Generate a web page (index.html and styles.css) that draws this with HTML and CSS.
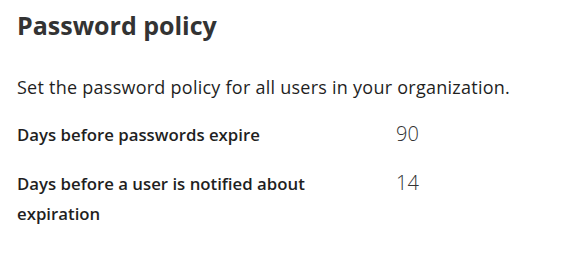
FILE: index.html
```html
<!DOCTYPE html>
<html lang="en">
<head>
    <meta charset="UTF-8">
    <meta name="viewport" content="width=device-width, initial-scale=1.0">
    <title>Password policy</title>
    <link rel="stylesheet" href="styles.css">
</head>
<body>
    <div class="policy">
        <h1 class="policy-title">Password policy</h1>

        <p class="policy-desc">Set the password policy for all users in your organization.</p>

        <div class="policy-row">
            <span class="policy-label">Days before passwords expire</span>
            <span class="policy-value">90</span>
        </div>

        <div class="policy-row">
            <span class="policy-label">Days before a user is notified about expiration</span>
            <span class="policy-value">14</span>
        </div>
    </div>
</body>
</html>
```

FILE: styles.css
```css
body {
    margin: 0;
    background-color: #ffffff;
    font-family: "Open Sans", "Noto Sans", sans-serif;
    color: #1f1f1f;
}

.policy {
    padding: 9px 17px 0 17px;
}

.policy-title {
    margin: 0;
    font-size: 25px;
    font-weight: 700;
    line-height: 32px;
    color: #333333;
}

.policy-desc {
    margin: 34px 0 0 0;
    font-size: 18px;
    letter-spacing: 0.25px;
    line-height: 24px;
}

.policy-row {
    display: grid;
    grid-template-columns: 379px auto;
    align-items: baseline;
    margin-top: 20px;
}

.policy-row + .policy-row {
    margin-top: 18px;
}

.policy-label {
    max-width: 300px;
    font-size: 16.8px;
    font-weight: 600;
    line-height: 30px;
}

.policy-value {
    font-size: 20px;
    font-weight: 300;
    line-height: 30px;
    color: #333333;
}
```
